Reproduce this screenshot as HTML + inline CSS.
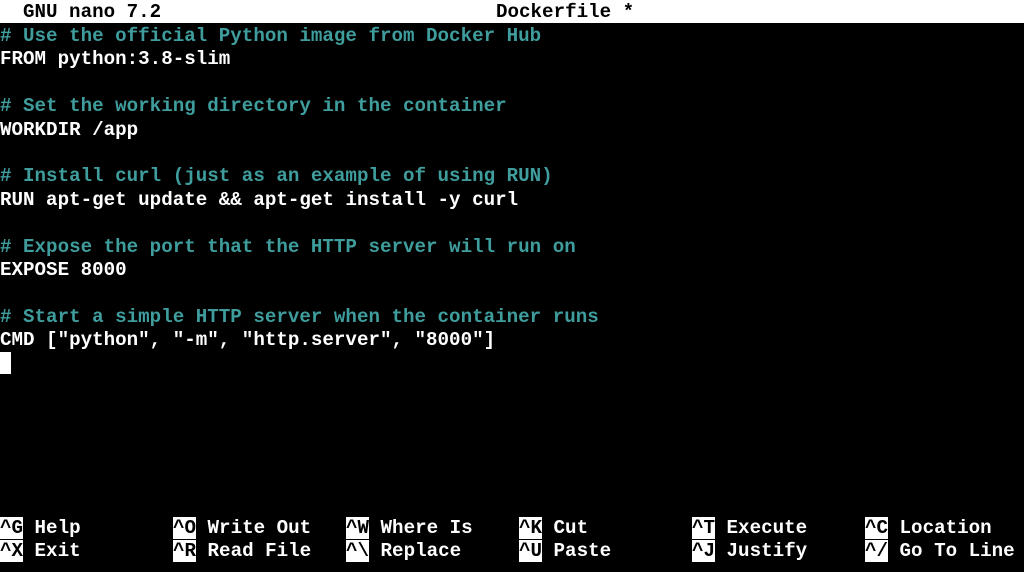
<!DOCTYPE html>
<html><head><meta charset="utf-8"><style>
html,body{margin:0;padding:0;background:#000;width:1024px;height:572px;overflow:hidden}
body{font-family:"Liberation Mono",monospace;font-size:19.2px;font-weight:bold;color:#fff;position:relative}
.r{position:absolute;left:0;height:23.4px;line-height:23.4px;white-space:pre;margin-top:1.5px}
.c{color:#3f9d9d}
.top{position:absolute;left:0;top:0;width:1024px;height:23px;background:#fff;color:#000}
.top .r{margin-top:0.5px}
.k{background:#fff;color:#000}
.cur{position:absolute;left:0;top:352px;width:11px;height:22px;background:#fff}
</style></head><body>
<div class="top"><div class="r" style="top:0;left:23px">GNU nano 7.2</div><div class="r" style="top:0;left:496px">Dockerfile *</div></div>
<div class="r c" style="top:23.4px"># Use the official Python image from Docker Hub</div>
<div class="r" style="top:46.8px">FROM python:3.8-slim</div>
<div class="r c" style="top:93.6px"># Set the working directory in the container</div>
<div class="r" style="top:117px">WORKDIR /app</div>
<div class="r c" style="top:163.8px"># Install curl (just as an example of using RUN)</div>
<div class="r" style="top:187.2px">RUN apt-get update &amp;&amp; apt-get install -y curl</div>
<div class="r c" style="top:234px"># Expose the port that the HTTP server will run on</div>
<div class="r" style="top:257.4px">EXPOSE 8000</div>
<div class="r c" style="top:304.2px"># Start a simple HTTP server when the container runs</div>
<div class="r" style="top:327.6px">CMD ["python", "-m", "http.server", "8000"]</div>
<div class="cur"></div>
<div class="r" style="top:515.5px;left:0"><span class="k">^G</span> Help</div>
<div class="r" style="top:538.9px;left:0"><span class="k">^X</span> Exit</div>
<div class="r" style="top:515.5px;left:173px"><span class="k">^O</span> Write Out</div>
<div class="r" style="top:538.9px;left:173px"><span class="k">^R</span> Read File</div>
<div class="r" style="top:515.5px;left:346px"><span class="k">^W</span> Where Is</div>
<div class="r" style="top:538.9px;left:346px"><span class="k">^\</span> Replace</div>
<div class="r" style="top:515.5px;left:519px"><span class="k">^K</span> Cut</div>
<div class="r" style="top:538.9px;left:519px"><span class="k">^U</span> Paste</div>
<div class="r" style="top:515.5px;left:692px"><span class="k">^T</span> Execute</div>
<div class="r" style="top:538.9px;left:692px"><span class="k">^J</span> Justify</div>
<div class="r" style="top:515.5px;left:865px"><span class="k">^C</span> Location</div>
<div class="r" style="top:538.9px;left:865px"><span class="k">^/</span> Go To Line</div>
</body></html>
